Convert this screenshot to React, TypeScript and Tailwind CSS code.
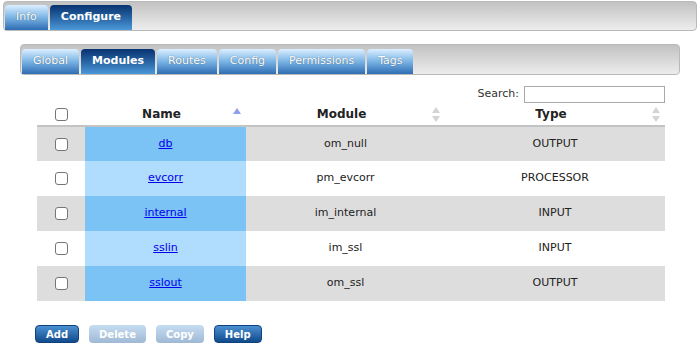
import React from "react"

const font = "font-['DejaVu_Sans',sans-serif]"

const rows = [
    { name: "db", module: "om_null", type: "OUTPUT" },
    { name: "evcorr", module: "pm_evcorr", type: "PROCESSOR" },
    { name: "internal", module: "im_internal", type: "INPUT" },
    { name: "sslin", module: "im_ssl", type: "INPUT" },
    { name: "sslout", module: "om_ssl", type: "OUTPUT" },
]

function Tab({ label, active }: { label: string; active?: boolean }) {
    return (
        <div
            className={
                "flex h-[25px] items-center rounded-t-[4px] px-[11px] text-[11px] text-white " +
                (active
                    ? "bg-gradient-to-b from-[#083270] to-[#4b98d9] font-bold"
                    : "bg-gradient-to-b from-[#dcefff] via-[#7ab4e4] to-[#2f6db3] [text-shadow:0_0_1px_rgba(0,0,0,0.5)]")
            }
        >
            {label}
        </div>
    )
}

function Bar({ children, className }: { children: React.ReactNode; className: string }) {
    return (
        <div
            className={
                "flex items-end gap-[2px] rounded-[4px] border border-[#b9b9b9] bg-gradient-to-b from-[#c2c2c2] to-[#ededed] pl-[1px] " +
                className
            }
        >
            {children}
        </div>
    )
}

function Box() {
    return <div className="mx-auto h-[13px] w-[13px] rounded-[3px] border border-[#767676] bg-white" />
}

function SortBoth() {
    return (
        <svg width="8" height="16" viewBox="0 0 8 16" className="absolute right-[5px] top-[4px]">
            <polygon points="4,0 8,6 0,6" fill="#d4d4d4" />
            <polygon points="0,9 8,9 4,15" fill="#d4d4d4" />
        </svg>
    )
}

function Btn({ label, disabled }: { label: string; disabled?: boolean }) {
    return (
        <div
            className={
                "flex h-[18px] items-center rounded-[4px] px-[10px] text-[10px] font-bold text-white " +
                (disabled
                    ? "bg-gradient-to-b from-[#c6ddf1] to-[#9fb8d5] text-[#eef4fa]"
                    : "border border-[#0f427d] bg-gradient-to-b from-[#4b90d1] to-[#104b8c]")
            }
        >
            {label}
        </div>
    )
}

export default function App() {
    return (
        <div className={"relative h-[356px] w-[700px] bg-white pt-[1px] " + font}>
            <Bar className="ml-[3px] h-[30px] w-[694px]">
                <Tab label="Info" />
                <Tab label="Configure" active />
            </Bar>
            <Bar className="ml-[20px] mt-[13px] h-[31px] w-[660px]">
                <Tab label="Global" />
                <Tab label="Modules" active />
                <Tab label="Routes" />
                <Tab label="Config" />
                <Tab label="Permissions" />
                <Tab label="Tags" />
            </Bar>
            <div className="ml-[37px] w-[628px]">
                <div className="mt-[11px] flex items-center justify-end gap-[5px] text-[11px] text-[#333]">
                    <span>Search:</span>
                    <input className="h-[17px] w-[141px] border border-[#a9a9a9] bg-white outline-none" />
                </div>
                <table className="w-[628px] table-fixed border-collapse text-[11px] text-[#222]">
                    <colgroup>
                        <col className="w-[48px]" />
                        <col className="w-[161px]" />
                        <col className="w-[199px]" />
                        <col className="w-[220px]" />
                    </colgroup>
                    <thead>
                        <tr className="h-[23px] border-b-2 border-[#c4c4c4] text-[12px] font-bold text-[#222]">
                            <th className="p-0">
                                <Box />
                            </th>
                            <th className="relative pl-[10px] pr-[18px]">
                                Name
                                <svg width="8" height="6" viewBox="0 0 8 6" className="absolute right-[5px] top-[5px]">
                                    <polygon points="4,0 8,6 0,6" fill="#8d9ff0" />
                                </svg>
                            </th>
                            <th className="relative pl-[10px] pr-[18px]">
                                Module
                                <SortBoth />
                            </th>
                            <th className="relative pl-[10px] pr-[18px]">
                                Type
                                <SortBoth />
                            </th>
                        </tr>
                    </thead>
                    <tbody>
                        {rows.map((r, i) => (
                            <tr key={r.name} className={"h-[35px] " + (i % 2 === 0 ? "bg-[#dddddd]" : "bg-white")}>
                                <td className="p-0">
                                    <Box />
                                </td>
                                <td className={"px-[10px] text-center " + (i % 2 === 0 ? "bg-[#7bc2f5]" : "bg-[#b0dcfe]")}>
                                    <a href="#" className="text-[#0000ee] underline">
                                        {r.name}
                                    </a>
                                </td>
                                <td className="px-[10px] text-center">{r.module}</td>
                                <td className="px-[10px] text-center">{r.type}</td>
                            </tr>
                        ))}
                    </tbody>
                </table>
            </div>
            <div className="ml-[35px] mt-[24px] flex gap-[10px]">
                <Btn label="Add" />
                <Btn label="Delete" disabled />
                <Btn label="Copy" disabled />
                <Btn label="Help" />
            </div>
        </div>
    )
}
